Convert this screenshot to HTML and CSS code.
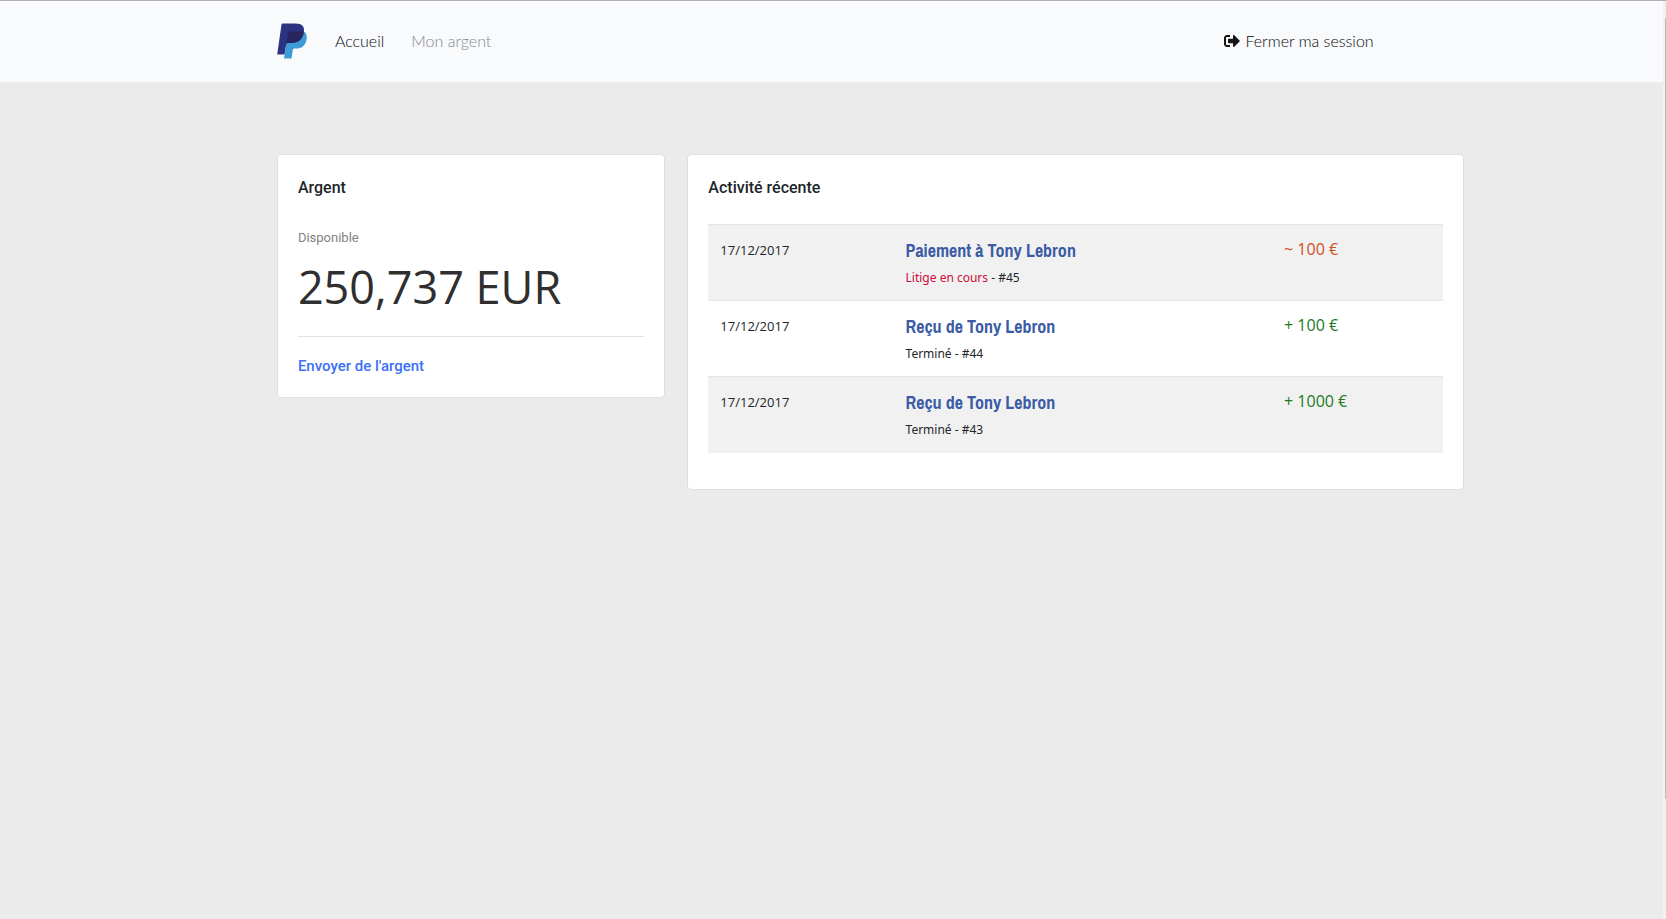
FILE: index.html
```html
<!DOCTYPE html>
<html lang="fr">
<head>
<meta charset="utf-8">
<title>Accueil</title>
<link rel="stylesheet" href="styles.css">
</head>
<body>
<div class="page">
  <header class="navbar">
    <a class="brand" href="#" aria-label="Accueil">
      <svg class="logo" viewBox="0 0 30 36" aria-hidden="true">
        <path fill="#3d9bd9" d="M11.500 8H26.500C29.500 10 30.300 13 29.500 17C28.300 23 24.500 25.500 19 25.500H17.500C16.500 25.500 16 26 15.800 27L14.500 35.500H7Z"/>
        <path fill="#2b3480" d="M5.500 .5H18.500C25 .5 28 3.500 26.800 9.500C25.500 16.500 21 20 14.500 20H11C10 20 9.500 20.500 9.200 21.500L7.500 31.500H.2L4.500 1.500Q4.700 .5 5.500 .5Z"/>
        <path fill="#27255f" d="M11.900 8.500H26.900C26 16.500 21 20 14.500 20H11Q9.700 20 9.300 21.500L11 9.400Q11.200 8.500 11.900 8.500Z"/>
      </svg>
    </a>
    <nav class="links">
      <a class="link active" href="#">Accueil</a>
      <a class="link" href="#">Mon argent</a>
    </nav>
    <a class="link active logout" href="#">
      <svg class="exit" viewBox="0 0 512 448" aria-hidden="true">
        <path d="M497 241 329 409c-15 15-41 4.500-41-17v-96H152c-13.300 0-24-10.700-24-24v-96c0-13.300 10.700-24 24-24h136V56c0-21.400 25.900-32 41-17l168 168c9.300 9.400 9.300 24.600 0 34zM192 404v-40c0-6.600-5.400-12-12-12H96c-17.700 0-32-14.300-32-32V128c0-17.700 14.300-32 32-32h84c6.600 0 12-5.400 12-12V44c0-6.600-5.400-12-12-12H96C43 32 0 75 0 128v192c0 53 43 96 96 96h84c6.600 0 12-5.400 12-12z"/>
      </svg>
      <span>Fermer ma session</span>
    </a>
  </header>
  <main class="content">
    <section class="card">
      <h2 class="card-title">Argent</h2>
      <p class="label">Disponible</p>
      <p class="balance">250,737 EUR</p>
      <hr class="rule">
      <a class="send" href="#">Envoyer de l'argent</a>
    </section>
    <section class="card activity">
      <h2 class="card-title">Activité récente</h2>
      <table class="table">
        <colgroup><col class="col-date"><col class="col-detail"><col></colgroup>
        <tbody>
          <tr>
            <td class="date">17/12/2017</td>
            <td><a class="title" href="#">Paiement à Tony Lebron</a><p class="status"><span class="dispute">Litige en cours</span> - #45</p></td>
            <td class="amount pending">~ 100 €</td>
          </tr>
          <tr>
            <td class="date">17/12/2017</td>
            <td><a class="title" href="#">Reçu de Tony Lebron</a><p class="status">Terminé - #44</p></td>
            <td class="amount">+ 100 €</td>
          </tr>
          <tr>
            <td class="date">17/12/2017</td>
            <td><a class="title" href="#">Reçu de Tony Lebron</a><p class="status">Terminé - #43</p></td>
            <td class="amount">+ 1000 €</td>
          </tr>
        </tbody>
      </table>
    </section>
  </main>
</div>
<div class="scroll-track"><div class="scroll-thumb"></div></div>
</body>
</html>
```
FILE: styles.css
```css
* { box-sizing: border-box; }
body {
  margin: 0;
  min-height: 100vh;
  display: flex;
  background: #ebebeb;
  border-top: 1px solid #b5adb5;
  color: #212529;
  font-family: "Open Sans", "Noto Sans", sans-serif;
}
a { text-decoration: none; }
p, h2 { margin: 0; }
.page { flex: 1; }
.navbar {
  display: flex;
  align-items: center;
  height: 81px;
  padding: 0 17.400% 2px 16.650%;
  background: #f8fafc;
}
.brand, .logo { display: block; }
.logo { width: 30px; height: 36px; }
.links { display: flex; gap: 27px; margin-left: 28px; }
.link {
  color: #85878a;
  font: 300 16px/24px Lato, "Open Sans", sans-serif;
}
.active { color: #08090a; }
.logout { display: flex; align-items: center; gap: 5px; margin-left: auto; }
.exit { width: 16px; height: 14px; fill: #151515; }
.content {
  display: grid;
  grid-template-columns: 1fr 2fr;
  gap: 22px;
  align-items: start;
  padding: 72px 11.950% 72px 16.650%;
}
.card {
  padding: 21px 20px 20px;
  background: #fff;
  border: 1px solid #dfdfdf;
  border-radius: 4px;
}
.card-title { font: 500 16px/24px Roboto, sans-serif; }
.label {
  margin-top: 28px;
  color: #828282;
  font: 13px/20px Roboto, sans-serif;
}
.balance { margin-top: 3px; color: #2f2f2f; font-size: 45px; line-height: 72px; }
.rule { height: 1px; margin: 13px 0 18px; border: 0; background: #e2e2e2; }
.send { display: block; color: #3b71f5; font: 500 15px/22px Roboto, sans-serif; }
.activity { padding-bottom: 36px; }
.table {
  width: 100%;
  margin-top: 24px;
  border-collapse: collapse;
  table-layout: fixed;
}
.col-date { width: 25.200%; }
.col-detail { width: 51.500%; }
.table td {
  height: 76px;
  padding: 12px 12px 8px;
  vertical-align: top;
  border-top: 1px solid #e5e5e5;
  line-height: 26px;
}
.table tr:nth-child(odd) { background: #f1f1f1; }
.date { font-size: 13px; }
.title {
  display: block;
  color: #3b5ba5;
  font: 700 18px/28px "Liberation Sans Narrow", "Archivo Narrow", "Arial Narrow", Roboto, sans-serif;
}
.status { font-family: "Noto Sans", sans-serif; font-size: 12px; line-height: 25px; }
.dispute { color: #cc0d38; }
.table .amount { color: #1c7a1c; font-size: 16px; line-height: 24px; }
.table .pending { color: #cf4f22; }
.scroll-track { width: 3px; padding: 17px 0 0 2px; background: #f1f1f1; }
.scroll-thumb { height: 85vh; background: #b9b9b9; }
```
